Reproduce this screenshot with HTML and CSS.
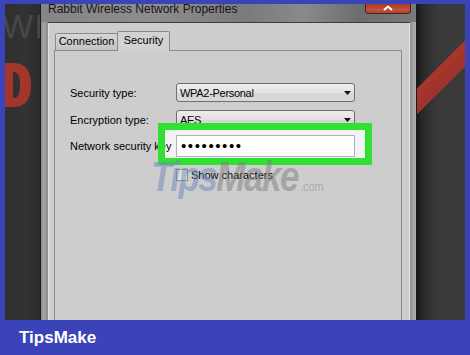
FILE: index.html
```html
<!DOCTYPE html>
<html lang="en">
<head>
<meta charset="utf-8">
<title>Rabbit Wireless Network Properties</title>
<link rel="stylesheet" href="styles.css">
</head>
<body>
<div class="shot">
  <div class="screen">
    <div class="bg-left">
      <span class="wi">WI</span>
      <svg class="red-d" width="30" height="44" viewBox="0 0 30 44">
        <path d="M0 0 H12 C26 0 30 10 30 22 C30 34 26 44 12 44 H0 Z M12 9 V35 C18 35 19 30 19 22 C19 14 18 9 12 9 Z" fill="#a3352b" fill-rule="evenodd"/>
      </svg>
    </div>
    <div class="window">
      <div class="titlebar">
        <span class="title">Rabbit Wireless Network Properties</span>
        <span class="close">
          <svg width="12" height="6" viewBox="0 0 12 6"><path d="M2 5 L6 1.5 L10 5" fill="none" stroke="#fff" stroke-width="2"/></svg>
        </span>
      </div>
      <div class="client">
        <div class="tabs">
          <div class="tab">Connection</div>
          <div class="tab active">Security</div>
        </div>
        <div class="panel">
          <div class="row row-1">
            <span class="lbl">Security type:</span>
            <div class="select">
              <span>WPA2-Personal</span>
              <svg class="arrow" width="7" height="4" viewBox="0 0 7 4"><path d="M0 0 H7 L3.5 4 Z" fill="#111"/></svg>
            </div>
          </div>
          <div class="row row-2">
            <span class="lbl">Encryption type:</span>
            <div class="select">
              <span>AES</span>
              <svg class="arrow" width="7" height="4" viewBox="0 0 7 4"><path d="M0 0 H7 L3.5 4 Z" fill="#111"/></svg>
            </div>
          </div>
          <div class="row row-3">
            <span class="lbl">Network security key</span>
            <div class="field-wrap">
              <div class="field">•••••••••</div>
            </div>
          </div>
          <div class="row row-4">
            <span class="check"></span>
            <span class="check-lbl">Show characters</span>
          </div>
          <div class="watermark"><span class="wm-tips">Tips</span><span class="wm-make">Make</span><span class="wm-com">.com</span></div>
        </div>
      </div>
    </div>
    <div class="bg-right"></div>
  </div>
  <footer class="brand">TipsMake</footer>
</div>
</body>
</html>
```

FILE: styles.css
```css
* { box-sizing: border-box; }

html, body {
  margin: 0;
  padding: 0;
}

body {
  font-family: "Liberation Sans", Arial, sans-serif;
  background: #3a43b7;
}

.shot {
  width: 470px;
  height: 355px;
  background: #3a43b7;
  padding: 4px 5px 0 5px;
  display: flex;
  flex-direction: column;
  overflow: hidden;
}

.screen {
  height: 316px;
  display: flex;
  overflow: hidden;
  flex: none;
}

/* left dark backdrop */
.bg-left {
  width: 35px;
  flex: none;
  background: linear-gradient(90deg, #2f2f2f, #333333 60%, #2b2b2b);
  display: flex;
  flex-direction: column;
  overflow: hidden;
}

.wi {
  font-size: 33px;
  line-height: 28px;
  margin-top: 9px;
  margin-left: -3px;
  color: #474747;
  letter-spacing: 1px;
  white-space: nowrap;
}

.red-d {
  margin-top: 22px;
  margin-left: -4px;
  flex: none;
}

/* window */
.window {
  width: 377px;
  flex: none;
  display: flex;
  flex-direction: column;
  border-left: 1px solid #1b1b1b;
  border-right: 1px solid #1b1b1b;
  background: linear-gradient(90deg, #8e8e8e, #a4a4a4 3px, #8a8a8a 7px, #7c7c7c 50%, #8a8a8a 98%, #b0b0b0);
}

.titlebar {
  height: 18px;
  flex: none;
  display: flex;
  align-items: flex-start;
  padding-left: 7px;
  background: linear-gradient(90deg, #858585 0%, #8d8d8d 30%, #7a7a7a 55%, #8a8a8a 70%, #6c6c6c 85%, #7a7a7a 100%);
}

.title {
  font-size: 12px;
  line-height: 12px;
  margin-top: -1px;
  color: #161616;
  white-space: nowrap;
}

.close {
  margin-left: auto;
  margin-right: 5px;
  width: 46px;
  height: 10px;
  border: 1px solid #4d2016;
  border-top: none;
  border-radius: 0 0 4px 4px;
  background: linear-gradient(180deg, #a83a26, #c2543a 60%, #b04530);
  display: flex;
  justify-content: center;
  align-items: flex-start;
  padding-top: 1px;
}

.client {
  flex: 1;
  margin: 0 6px 0 7px;
  background: #cdcdcd;
  border-top: 1px solid #3e3e3e;
  padding-top: 8px;
  display: flex;
  flex-direction: column;
  box-shadow: inset 1px 0 0 #e2e2e2, inset -1px 0 0 #e2e2e2;
}

.tabs {
  display: flex;
  align-items: flex-end;
  height: 20px;
  margin-left: 7px;
  margin-bottom: -1px;
  position: relative;
  z-index: 1;
  flex: none;
}

.tab {
  height: 17px;
  width: 63px;
  margin-bottom: 1px;
  border: 1px solid #8a8a8a;
  border-bottom: none;
  border-radius: 2px 2px 0 0;
  background: linear-gradient(180deg, #d6d6d6, #c3c3c3);
  font-size: 11px;
  line-height: 15px;
  color: #000;
  text-align: center;
}

.tab.active {
  height: 20px;
  width: 53px;
  margin-left: -1px;
  margin-bottom: 0;
  background: #d2d2d2;
  line-height: 15px;
  padding-top: 1px;
}

.panel {
  flex: 1;
  margin: 0 8px 0 6px;
  border: 1px solid #8c8c8c;
  border-bottom: none;
  background: #cdcdcd;
  position: relative;
  z-index: 0;
  padding: 32px 0 0 15px;
}

.row {
  display: flex;
  align-items: center;
}

.row-1 { height: 19px; margin-bottom: 8px; }
.row-2 { height: 19px; margin-bottom: 6px; }
.row-3 { height: 22px; margin-bottom: 11px; }
.row-4 { height: 13px; padding-left: 106px; }

.lbl {
  width: 106px;
  flex: none;
  font-size: 11px;
  color: #000;
  white-space: nowrap;
  position: relative;
  z-index: 1;
}

.select {
  width: 179px;
  height: 19px;
  border: 1px solid #6f6f6f;
  border-radius: 3px;
  background: linear-gradient(180deg, #ededed, #e2e2e2 50%, #d6d6d6 51%, #d9d9d9);
  display: flex;
  align-items: center;
  justify-content: space-between;
  padding: 0 3px 0 3px;
  font-size: 11px;
  letter-spacing: -0.3px;
  color: #000;
}

.arrow { flex: none; }

.field-wrap {
  position: relative;
  width: 179px;
  height: 22px;
}

.field-wrap::before {
  content: "";
  position: absolute;
  left: -11px;
  right: -10px;
  top: -5px;
  bottom: -1px;
  background: #f3f3f3;
  z-index: 0;
}

.field-wrap::after {
  content: "";
  position: absolute;
  left: -18px;
  right: -17px;
  top: -12px;
  bottom: -8px;
  border: 7px solid #31e131;
  z-index: 2;
}

.field {
  position: relative;
  z-index: 1;
  height: 22px;
  border: 1px solid #a7b6c6;
  background: #ffffff;
  font-size: 15px;
  line-height: 20px;
  letter-spacing: 1.6px;
  padding-left: 4px;
  color: #000;
}

.check {
  width: 12px;
  height: 12px;
  flex: none;
  border: 1px solid #8b8b8b;
  background: linear-gradient(135deg, #cfcfcf, #f4f4f4);
  box-shadow: inset 0 0 0 1px #e6e6e6;
}

.check-lbl {
  margin-left: 3px;
  font-size: 11px;
  color: #000;
  white-space: nowrap;
}

.watermark {
  position: absolute;
  left: 96px;
  top: 106px;
  z-index: 3;
  font-weight: bold;
  font-style: italic;
  font-size: 35px;
  line-height: 32px;
  transform: scaleY(1.2);
  transform-origin: left top;
  white-space: nowrap;
  pointer-events: none;
  letter-spacing: -1.5px;
}

.wm-tips { color: rgba(110, 140, 190, 0.55); }
.wm-make { color: rgba(125, 125, 125, 0.5); }
.wm-com {
  font-size: 11px;
  font-style: normal;
  font-weight: normal;
  letter-spacing: 0;
  margin-left: 2px;
  color: rgba(140, 140, 140, 0.55);
}

/* right dark backdrop with red stripe */
.bg-right {
  width: 48px;
  flex: none;
  background:
    linear-gradient(135deg, transparent 60px, #a8372d 60px, #9c3229 78px, transparent 78px),
    linear-gradient(90deg, #161616, #262626 4px, #2e2e2e 10px, #393939 20px, #3b3b3b);
}

.brand {
  height: 35px;
  flex: none;
  padding-left: 14px;
  font-size: 17px;
  font-weight: bold;
  line-height: 35px;
  color: #ffffff;
}
```
